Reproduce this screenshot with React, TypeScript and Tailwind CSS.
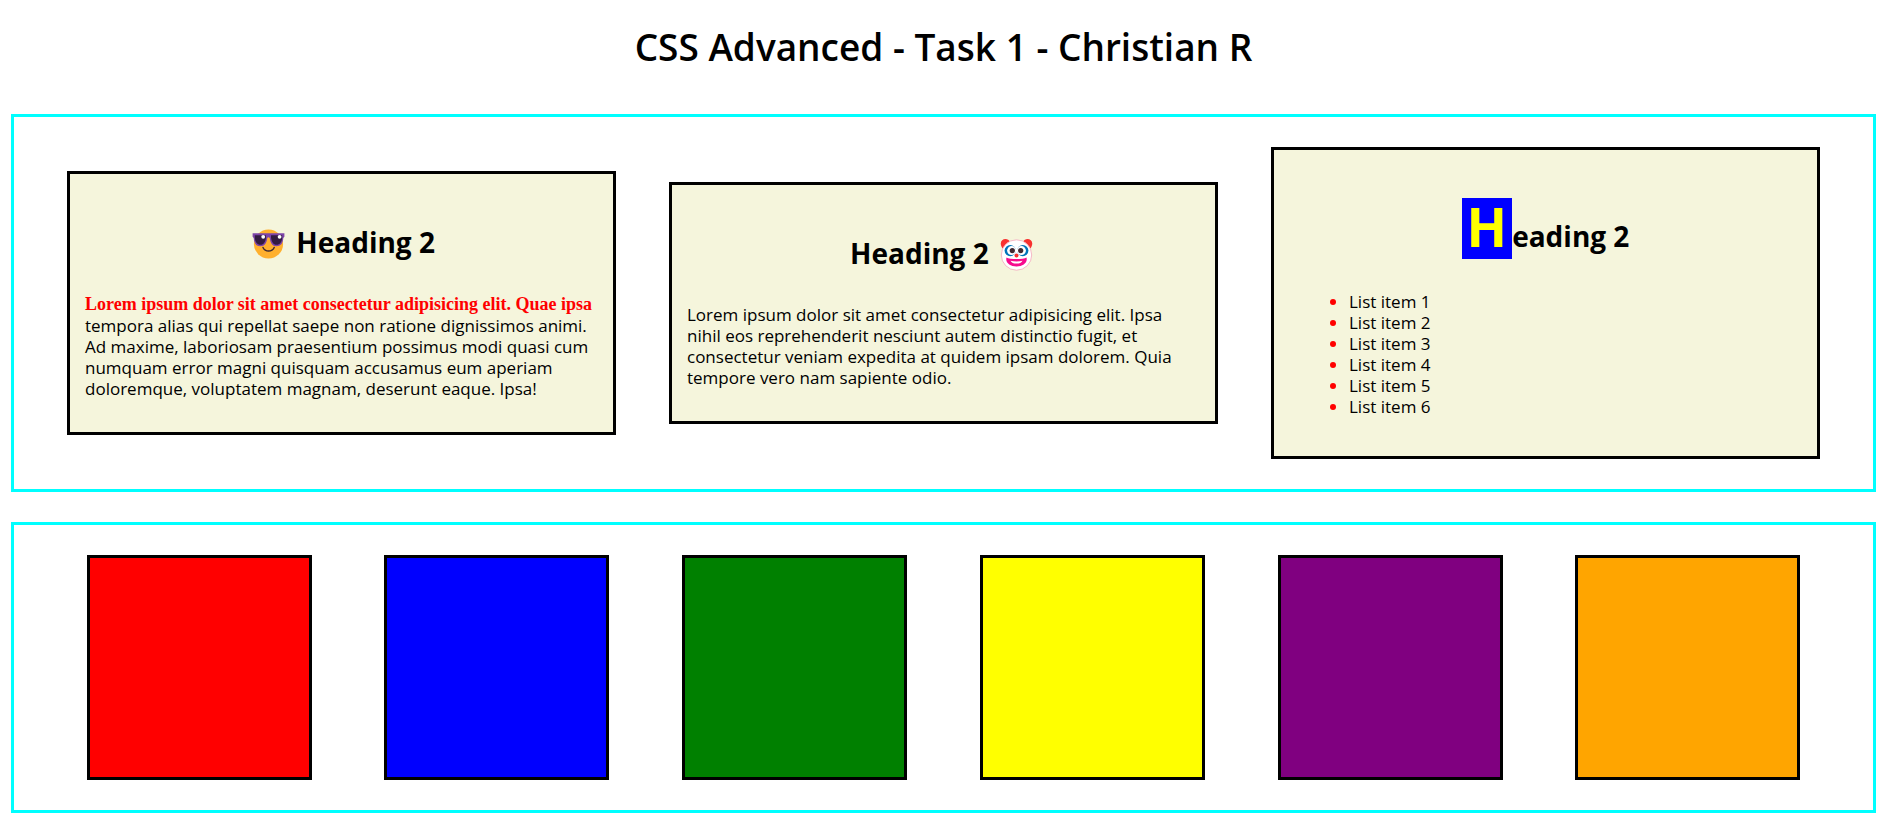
import type { ReactNode } from "react";

const swatches = [
  { name: "Red", color: "bg-[#ff0000]" },
  { name: "Blue", color: "bg-[#0000ff]" },
  { name: "Green", color: "bg-[#008000]" },
  { name: "Yellow", color: "bg-[#ffff00]" },
  { name: "Purple", color: "bg-[#800080]" },
  { name: "Orange", color: "bg-[#ffa500]" },
];

const listItems = [1, 2, 3, 4, 5, 6];

function CoolFace() {
  return (
    <svg viewBox="0 0 33 33" className="mx-1 inline-block size-[33px] align-[-7px]" role="img" aria-label="Cool face">
      <circle cx="16.5" cy="17" r="14.6" fill="#ffb02e" />
      <path d="M11 20.5c1.200 2.600 3.200 3.600 5.600 3.600s4.400-1 5.600-3.600" fill="none" stroke="#402a32" strokeWidth="1.500" strokeLinecap="round" />
      <path d="M0.600 6.200H32.400V9.800L31.300 11C31 16.500 28.500 19.200 24.500 19.200C20.300 19.200 18.300 15.800 17.800 11.200C17.300 10 15.700 10 15.200 11.200C14.700 15.800 12.700 19.200 8.500 19.200C4.500 19.200 2 16.500 1.700 11L0.600 9.800Z" fill="#7c44a8" />
      <path d="M2.800 8.200H14V10.500C13.500 15 11.600 17.800 8.500 17.800C5.200 17.800 3.300 15.400 2.800 11Z" fill="#321b41" />
      <path d="M19 8.200H30.200V11C29.700 15.400 27.800 17.800 24.500 17.800C21.400 17.800 19.500 15 19 10.500Z" fill="#321b41" />
      <circle cx="11.200" cy="9.800" r="1.900" fill="#fff" />
      <circle cx="27.600" cy="9.800" r="1.900" fill="#fff" />
    </svg>
  );
}

function ClownFace() {
  return (
    <svg viewBox="0 0 33 33" className="mx-1 inline-block size-[33px] align-[-7px]" role="img" aria-label="Clown face">
      <path d="M0.800 5.500C0.800 2.500 3 1 5.500 1C7.500 1 9 2 9.800 3.400L5.500 11.500C2.800 11.500 0.800 8.800 0.800 5.500Z" fill="#f8312f" />
      <path d="M32.200 5.500C32.200 2.500 30 1 27.500 1C25.500 1 24 2 23.200 3.400L27.500 11.500C30.200 11.500 32.200 8.800 32.200 5.500Z" fill="#f8312f" />
      <circle cx="16.500" cy="17" r="15.200" fill="#fff" stroke="#f3a6b8" strokeWidth="0.800" />
      <circle cx="10.200" cy="12.600" r="5.600" fill="#0074ba" />
      <circle cx="22.800" cy="12.600" r="5.600" fill="#0074ba" />
      <circle cx="11.600" cy="12.600" r="4.500" fill="#fff" />
      <circle cx="21.400" cy="12.600" r="4.500" fill="#fff" />
      <circle cx="12.300" cy="12.600" r="2.600" fill="#402a32" />
      <circle cx="20.700" cy="12.600" r="2.600" fill="#402a32" />
      <circle cx="16.500" cy="17.500" r="2" fill="#f8312f" />
      <path d="M6.500 19.500C9.500 21.600 23.500 21.600 26.500 19.500C28 24.500 23 28.500 16.500 28.500S5 24.500 6.500 19.500Z" fill="#f70a8d" />
      <path d="M10.500 22.800C14 23.800 19 23.800 22.500 22.800C21.500 25 19.500 25.600 16.500 25.600S11.500 25 10.500 22.800Z" fill="#fff" />
    </svg>
  );
}

function Card({ children }: { children: ReactNode }) {
  return <article className="border-3 border-black bg-[#f5f5dc] p-[15px]">{children}</article>;
}

export default function App() {
  return (
    <main className="bg-white pt-[26px] pr-[12px] pb-[10px] pl-[11px] font-['Open_Sans','Noto_Sans',sans-serif] text-[17px] leading-[21px] text-black">
      <h1 className="mb-[46px] text-center text-[37px] leading-[42px] font-semibold">
        CSS Advanced - Task 1 - Christian R
      </h1>

      <section className="grid grid-cols-3 items-center gap-[53px] border-3 border-[#00ffff] px-[53px] py-[30px]">
        <Card>
          <h2 className="mt-[37px] mb-[35px] h-[32px] text-center text-[28px] leading-[32px] font-bold">
            <CoolFace /> Heading 2
          </h2>
          <p className="mb-[18px] whitespace-nowrap first-line:font-['Liberation_Serif',serif] first-line:text-[18px] first-line:leading-[22px] first-line:font-bold first-line:text-[#ff0000]">
            Lorem ipsum dolor sit amet consectetur adipisicing elit. Quae ipsa
            <br />
            tempora alias qui repellat saepe non ratione dignissimos animi.
            <br />
            Ad maxime, laboriosam praesentium possimus modi quasi cum
            <br />
            numquam error magni quisquam accusamus eum aperiam
            <br />
            doloremque, voluptatem magnam, deserunt eaque. Ipsa!
          </p>
        </Card>

        <Card>
          <h2 className="mt-[37px] mb-[35px] h-[32px] text-center text-[28px] leading-[32px] font-bold">
            Heading 2 <ClownFace />
          </h2>
          <p className="mb-[18px] whitespace-nowrap">
            Lorem ipsum dolor sit amet consectetur adipisicing elit. Ipsa
            <br />
            nihil eos reprehenderit nesciunt autem distinctio fugit, et
            <br />
            consectetur veniam expedita at quidem ipsam dolorem. Quia
            <br />
            tempore vero nam sapiente odio.
          </p>
        </Card>

        <Card>
          <h2 className="mt-[33px] mb-[32px] text-center text-[28px] leading-[32px] font-bold">
            <span className="inline-block bg-[#0000ff] px-[5px] pb-1 text-[53px] leading-[57px] text-[#ffff00]">H</span>eading 2
          </h2>
          <ul className="mb-[24px] list-disc pl-[60px] marker:text-[#ff0000]">
            {listItems.map((n) => (
              <li key={n}>List item {n}</li>
            ))}
          </ul>
        </Card>
      </section>

      <section className="mt-[30px] flex flex-wrap justify-evenly gap-y-[30px] border-3 border-[#00ffff] py-[30px]">
        {swatches.map((s) => (
          <div key={s.name} className={`size-[225px] border-3 border-black ${s.color}`} />
        ))}
      </section>
    </main>
  );
}
